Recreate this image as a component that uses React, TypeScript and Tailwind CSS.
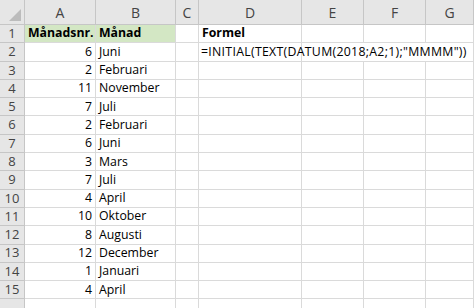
const cols = [
  { name: 'A', w: 'w-[71px]' },
  { name: 'B', w: 'w-[80px]' },
  { name: 'C', w: 'w-[23px]' },
  { name: 'D', w: 'w-[103px]' },
  { name: 'E', w: 'w-[62px]' },
  { name: 'F', w: 'w-[62px]' },
  { name: 'G', w: 'w-[48px]' },
];

const data: [number, string][] = [
  [6, 'Juni'],
  [2, 'Februari'],
  [11, 'November'],
  [7, 'Juli'],
  [2, 'Februari'],
  [6, 'Juni'],
  [3, 'Mars'],
  [7, 'Juli'],
  [4, 'April'],
  [10, 'Oktober'],
  [8, 'Augusti'],
  [12, 'December'],
  [1, 'Januari'],
  [4, 'April'],
];

const cell = 'shrink-0 h-full border-r border-b border-[#dadada] overflow-visible whitespace-nowrap flex items-center';

const Row = ({ n, children }: { n: number | string; children: React.ReactNode }) => (
  <div className="flex h-[18.3px]">
    <div className="w-[25px] shrink-0 h-full bg-[#e6e6e6] border-r border-b border-[#c6c6c6] flex items-center justify-center text-[13px] text-[#444]">
      {n}
    </div>
    {children}
  </div>
);

export default function App() {
  return (
    <div className="w-[474px] h-[308px] overflow-hidden bg-white text-[12.3px] text-black" style={{ fontFamily: '"Open Sans", sans-serif' }}>
      {/* column headers */}
      <div className="flex h-[25px]">
        <div className="w-[25px] shrink-0 h-full bg-[#e6e6e6] border-r border-b border-[#c6c6c6] relative">
          <svg className="absolute right-[3px] bottom-[3px]" width="12" height="12" viewBox="0 0 12 12">
            <polygon points="12,0 12,12 0,12" fill="#bcbcbc" />
          </svg>
        </div>
        {cols.map(c => (
          <div key={c.name} className={`${c.w} shrink-0 h-full bg-[#e6e6e6] border-r border-b border-[#c6c6c6] flex items-center justify-center text-[14px] text-[#444]`}>
            {c.name}
          </div>
        ))}
      </div>

      <Row n={1}>
        <div className={`${cols[0].w} ${cell} bg-[#d3e7c4] font-bold pl-[3px]`}>Månadsnr.</div>
        <div className={`${cols[1].w} ${cell} bg-[#d3e7c4] font-bold pl-[3px]`}>Månad</div>
        <div className={`${cols[2].w} ${cell}`} />
        <div className={`${cols[3].w} ${cell} font-bold pl-[3px]`}>Formel</div>
        <div className={`${cols[4].w} ${cell}`} />
        <div className={`${cols[5].w} ${cell}`} />
        <div className={`${cols[6].w} ${cell}`} />
      </Row>

      {data.map(([num, month], i) => (
        <Row key={i} n={i + 2}>
          <div className={`${cols[0].w} ${cell} justify-end pr-[3px]`}>{num}</div>
          <div className={`${cols[1].w} ${cell} pl-[3px]`}>{month}</div>
          <div className={`${cols[2].w} ${cell}`} />
          <div className={`${cols[3].w} ${cell} pl-[2px] relative z-10 ${i === 0 ? 'tracking-[0.3px]' : ''}`}>
            {i === 0 ? '=INITIAL(TEXT(DATUM(2018;A2;1);"MMMM"))' : ''}
          </div>
          <div className={`${cols[4].w} ${cell} ${i === 0 ? 'border-r-0' : ''}`} />
          <div className={`${cols[5].w} ${cell} ${i === 0 ? 'border-r-0' : ''}`} />
          <div className={`${cols[6].w} ${cell}`} />
        </Row>
      ))}

      <Row n="">
        {cols.map(c => (
          <div key={c.name} className={`${c.w} ${cell}`} />
        ))}
      </Row>
    </div>
  );
}
